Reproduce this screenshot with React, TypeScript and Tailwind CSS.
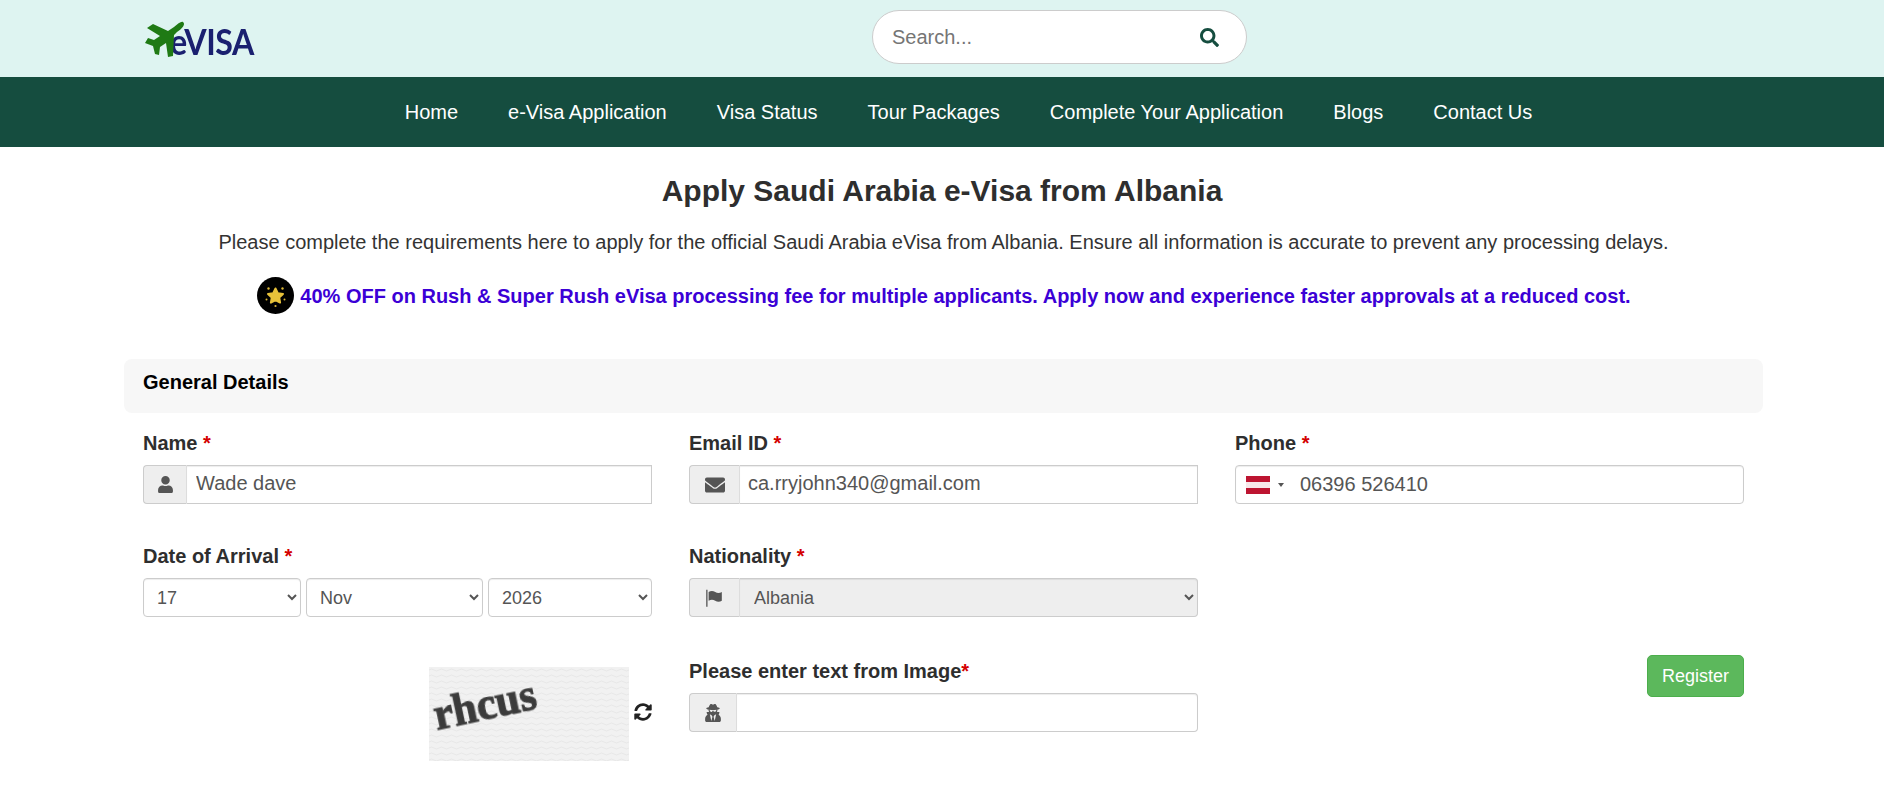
import { FaSearch, FaUser, FaEnvelope, FaUserSecret, FaSyncAlt } from 'react-icons/fa'
import type { ReactNode } from 'react'

const navLinks = ['Home', 'e-Visa Application', 'Visa Status', 'Tour Packages', 'Complete Your Application', 'Blogs', 'Contact Us']

const PlaneLogo = () => (
  <svg viewBox="0 0 60 42" className="w-[60px] h-[42px] shrink-0 relative z-10" fill="#1f7a14">
    <path d="M43 4C46 6 42 11 37 14L34 17L33 38L28 39L26 25L20 29L19 37L15 36L13 28L5 25L8 20L14 22L20 18L7 10L13 6L28 13L34 9C38 6 41 3 43 4Z" />
  </svg>
)

const PromoBadge = () => (
  <svg viewBox="0 0 37 37" className="w-[37px] h-[37px] shrink-0">
    <circle cx="18.500" cy="18.500" r="18.500" fill="#000000" />
    <polygon
      points="18.500,11.500 20.800,16.200 26,16.900 22.200,20.500 23.100,25.600 18.500,23.200 13.900,25.600 14.800,20.500 11,16.900 16.200,16.200"
      fill="#e8c23a"
      stroke="#e8c23a"
      strokeWidth="2"
      strokeLinejoin="round"
    />
    <g fill="#d9b535">
      <circle cx="11.500" cy="11.500" r="1.200" />
      <circle cx="25.500" cy="11.500" r="1.200" />
      <circle cx="9.500" cy="22.500" r="1" />
      <circle cx="27.500" cy="22.500" r="1" />
      <circle cx="18.500" cy="29" r="1.100" />
    </g>
  </svg>
)

const FlagIcon = () => (
  <svg viewBox="0 0 20 20" className="w-[22px] h-[22px]" fill="currentColor">
    <path d="M2 2.500h1.200V18H2z" />
    <path d="M4.200 4.500c2-1.300 4-1.300 6 0s4 1.200 6 0v8c-2 1.300-4 1.300-6 0s-4-1.200-6 0z" />
  </svg>
)

const FieldLabel = ({ text, tight }: { text: string; tight?: boolean }) => (
  <label className="block text-[20px] leading-[26px] font-bold text-[#2e2e2e] mb-[9px]">
    {text}
    {tight ? '' : ' '}
    <span className="text-[#d40000]">*</span>
  </label>
)

const Addon = ({ children, width }: { children: ReactNode; width: string }) => (
  <span className={`${width} shrink-0 flex items-center justify-center bg-[#eeeeee] border border-[#cccccc] border-r-[#dddddd] rounded-l-[4px] text-[#555555]`}>
    {children}
  </span>
)

const inputClass =
  'flex-1 min-w-0 h-full bg-white border border-l-0 border-[#cccccc] shadow-[inset_0_1px_1px_rgba(0,0,0,0.075)] px-[9px] pb-[2px] text-[20px] text-[#555555] outline-none'

const selectClass =
  'h-[39px] min-w-0 bg-white border border-[#cccccc] rounded-[4px] shadow-[inset_0_1px_1px_rgba(0,0,0,0.075)] pl-[9px] text-[18px] text-[#555555] outline-none'

const CaptchaImage = () => (
  <svg viewBox="0 0 200 94" className="w-[200px] h-[94px]">
    <defs>
      <pattern id="captcha-bg" width="10" height="6" patternUnits="userSpaceOnUse">
        <rect width="10" height="6" fill="#f1f1f1" />
        <path d="M0 3q2.500-2 5 0t5 0" stroke="#e7e7e7" strokeWidth="1" fill="none" />
      </pattern>
      <filter id="captcha-blur">
        <feGaussianBlur stdDeviation="0.6" />
      </filter>
    </defs>
    <rect width="200" height="94" fill="url(#captcha-bg)" />
    <text
      x="8"
      y="63"
      transform="rotate(-12 8 63)"
      fontFamily="'Liberation Serif', serif"
      fontWeight="700"
      fontSize="46"
      textLength="104"
      lengthAdjust="spacingAndGlyphs"
      fill="#3a3a3a"
      stroke="#444444"
      strokeWidth="1.200"
      filter="url(#captcha-blur)"
    >
      rhcus
    </text>
  </svg>
)

export default function App() {
  return (
    <div className="min-h-[792px] bg-white font-['Liberation_Sans',Arial,sans-serif] text-[#333333]">
      {/* Top bar */}
      <header className="h-[77px] bg-[#def4f1] flex items-center pl-[140px]">
        <div className="w-[732px] flex items-center">
          <PlaneLogo />
          <span className="-ml-[30px] mt-[3px] font-['Lato',sans-serif] font-bold text-[37px] leading-none tracking-[-0.5px] text-[#1a2070] inline-block origin-left scale-x-[0.87]">
            eVISA
          </span>
        </div>
        <div className="w-[375px] h-[54px] bg-white border border-[#cccccc] rounded-[27px] flex items-center pl-[19px] pr-[27px] -mt-[3px]">
          <input
            placeholder="Search..."
            className="flex-1 min-w-0 text-[20px] text-[#555555] placeholder:text-[#757575] outline-none bg-transparent"
          />
          <FaSearch className="w-[19px] h-[19px] text-[#154d3f]" />
        </div>
      </header>

      {/* Main nav */}
      <nav className="h-[70px] bg-[#154d3f] flex items-center justify-center gap-[50px] pl-[53px] text-[20px] text-white">
        {navLinks.map((link) => (
          <a key={link} href="#" className="whitespace-nowrap">
            {link}
          </a>
        ))}
      </nav>

      {/* Intro */}
      <div className="text-center pt-[25px]">
        <h1 className="text-[30px] leading-[38px] font-bold text-[#2e2e2e]">Apply Saudi Arabia e-Visa from Albania</h1>
        <p className="mt-[20px] pl-[3px] text-[20px] leading-[24px] text-[#333333]">
          Please complete the requirements here to apply for the official Saudi Arabia eVisa from Albania. Ensure all information is accurate to prevent any processing delays.
        </p>
        <div className="mt-[23px] flex items-center justify-center gap-[6px] pl-[4px]">
          <PromoBadge />
          <span className="text-[20px] leading-[24px] font-bold text-[#3b00d6]">
            40% OFF on Rush &amp; Super Rush eVisa processing fee for multiple applicants. Apply now and experience faster approvals at a reduced cost.
          </span>
        </div>
      </div>

      {/* Form */}
      <section className="mx-[124px] w-[1639px] mt-[45px]">
        <div className="h-[54px] bg-[#f7f7f7] rounded-[8px] px-[19px] pb-[8px] flex items-center text-[20px] font-bold text-black">
          General Details
        </div>

        <div className="px-[19px] pt-[17px] grid grid-cols-3 gap-x-[37px]">
          <div className="h-[113px]">
            <FieldLabel text="Name" />
            <div className="flex h-[39px]">
              <Addon width="w-[44px]">
                <FaUser className="w-[17px] h-[17px]" />
              </Addon>
              <input defaultValue="Wade dave" className={inputClass} />
            </div>
          </div>
          <div className="h-[113px]">
            <FieldLabel text="Email ID" />
            <div className="flex h-[39px]">
              <Addon width="w-[51px]">
                <FaEnvelope className="w-[20px] h-[20px]" />
              </Addon>
              <input defaultValue="ca.rryjohn340@gmail.com" className={`${inputClass} pl-[8px]`} />
            </div>
          </div>
          <div className="h-[113px]">
            <FieldLabel text="Phone" />
            <div className="flex items-center h-[39px] bg-white border border-[#cccccc] rounded-[4px] shadow-[inset_0_1px_1px_rgba(0,0,0,0.075)] pl-[10px]">
              <span className="w-[24px] h-[18px] flex flex-col shrink-0">
                <span className="flex-1 bg-[#bd1531]" />
                <span className="flex-1 bg-[#f7e8ea]" />
                <span className="flex-1 bg-[#bd1531]" />
              </span>
              <span className="ml-[8px] w-0 h-0 border-x-[3px] border-x-transparent border-t-[4px] border-t-[#555555]" />
              <input defaultValue="06396 526410" className="ml-[16px] pb-[2px] flex-1 min-w-0 text-[20px] text-[#555555] outline-none bg-transparent" />
            </div>
          </div>

          <div className="h-[115px]">
            <FieldLabel text="Date of Arrival" />
            <div className="flex gap-[5px]">
              <select defaultValue="17" className={`${selectClass} w-[158px]`}>
                <option>17</option>
              </select>
              <select defaultValue="Nov" className={`${selectClass} w-[177px]`}>
                <option>Nov</option>
              </select>
              <select defaultValue="2026" className={`${selectClass} flex-1`}>
                <option>2026</option>
              </select>
            </div>
          </div>
          <div className="h-[115px]">
            <FieldLabel text="Nationality" />
            <div className="flex h-[39px]">
              <Addon width="w-[51px]">
                <FlagIcon />
              </Addon>
              <select disabled defaultValue="Albania" className="flex-1 min-w-0 h-full bg-[#eeeeee] border border-l-0 border-[#cccccc] rounded-r-[4px] shadow-[inset_0_1px_1px_rgba(0,0,0,0.075)] pl-[10px] text-[18px] text-[#555555] opacity-100 outline-none">
                <option>Albania</option>
              </select>
            </div>
          </div>
          <div />

          <div className="flex justify-end items-start gap-[5px] mt-[9px]">
            <CaptchaImage />
            <FaSyncAlt className="w-[18px] h-[18px] mt-[36px] text-[#222222]" />
          </div>
          <div>
            <FieldLabel text="Please enter text from Image" tight />
            <div className="flex h-[39px]">
              <Addon width="w-[48px]">
                <FaUserSecret className="w-[18px] h-[18px]" />
              </Addon>
              <input className={`${inputClass} rounded-r-[4px] border-l`} />
            </div>
          </div>
          <div className="flex justify-end items-start -mt-[3px]">
            <button className="w-[97px] h-[42px] bg-[#5cb85c] border border-[#4cae4c] rounded-[5px] text-[18px] text-white">Register</button>
          </div>
        </div>
      </section>
    </div>
  )
}
